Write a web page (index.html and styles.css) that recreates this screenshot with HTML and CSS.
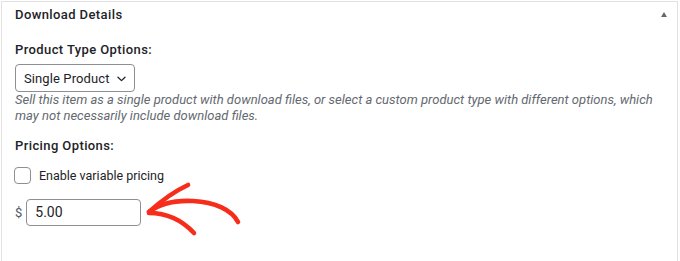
FILE: index.html
```html
<!DOCTYPE html>
<html lang="en">
<head>
    <meta charset="UTF-8">
    <title>Download Details</title>
    <link rel="stylesheet" href="styles.css">
</head>
<body>
    <div class="postbox">
        <div class="postbox-header">
            <h2>Download Details</h2>
            <span class="toggle-indicator"></span>
        </div>
        <div class="inside">
            <p class="field-label">Product Type Options:</p>
            <div class="select-box">
                <span>Single Product</span>
                <svg class="chevron" width="9" height="6" viewBox="0 0 9 6"><path d="M1 1.2 L4.5 4.6 L8 1.2" fill="none" stroke="#1d2327" stroke-width="1.3" stroke-linecap="round" stroke-linejoin="round"/></svg>
            </div>
            <p class="description">Sell this item as a single product with download files, or select a custom product type with different options, which may not necessarily include download files.</p>

            <p class="field-label pricing-label">Pricing Options:</p>
            <label class="check-row">
                <span class="checkbox"></span>
                <span>Enable variable pricing</span>
            </label>
            <div class="price-row">
                <span class="currency">$</span>
                <div class="price-input">5.00</div>
            </div>
        </div>

        <svg class="arrow" width="110" height="65" viewBox="140 175 110 65">
            <g fill="none" stroke="#f72d1c" stroke-width="4.6" stroke-linecap="round" stroke-linejoin="round">
                <path d="M148 211 C 158 203, 172 199, 192 200 C 214 201, 231 209, 237 221"/>
                <path d="M148 211 C 160 200, 174 190, 187 184"/>
                <path d="M148 212 C 164 212, 179 217, 193 232"/>
            </g>
        </svg>
    </div>
</body>
</html>
```

FILE: styles.css
```css
body {
    margin: 0;
    background: #fff;
    color: #1d2327;
    font-family: Roboto, "Noto Sans", sans-serif;
    font-size: 13px;
}
.postbox {
    position: relative;
    margin: 1px 2px 0 1px;
    height: 270px;
    border: 1px solid #e2e2e4;
    border-bottom: none;
}
.postbox-header {
    display: flex;
    justify-content: space-between;
    align-items: center;
    padding: 2px 10px 0 13px;
    height: 22px;
}
.postbox-header h2 {
    margin: 0;
    font-size: 13px;
    font-weight: 500;
    letter-spacing: 0.4px;
    line-height: 20px;
}
.toggle-indicator {
    width: 0;
    height: 0;
    border-left: 3px solid transparent;
    border-right: 3px solid transparent;
    border-bottom: 5px solid #646970;
    margin-top: -2px;
}
.inside {
    padding: 14px 13px 0 13px;
}
.field-label {
    margin: 0 0 4px;
    font-weight: 500;
    letter-spacing: 0.4px;
    line-height: 20px;
}
.pricing-label {
    margin-top: 12px;
}
.select-box {
    display: flex;
    align-items: center;
    gap: 7px;
    box-sizing: border-box;
    width: fit-content;
    height: 28px;
    padding: 0 8px 0 8px;
    border: 1px solid #8c8f94;
    border-radius: 4px;
    font-size: 13px;
    letter-spacing: 0.1px;
    white-space: nowrap;
}
.chevron {
    flex-shrink: 0;
    margin-top: 1px;
}
.description {
    margin: 0;
    color: #646970;
    font-style: italic;
    line-height: 16px;
}
.check-row {
    display: flex;
    align-items: center;
    gap: 8px;
    margin-top: 11px;
    height: 16px;
    font-size: 12.5px;
}
.checkbox {
    box-sizing: border-box;
    width: 17px;
    height: 17px;
    margin-left: -1px;
    border: 1px solid #8c8f94;
    border-radius: 4px;
}
.price-row {
    display: flex;
    align-items: center;
    gap: 4px;
    margin-top: 16px;
}
.currency {
    color: #50575e;
}
.price-input {
    box-sizing: border-box;
    width: 115px;
    height: 27px;
    padding: 0 8px;
    line-height: 25px;
    font-size: 14px;
    border: 1px solid #8c8f94;
    border-radius: 4px;
}
.arrow {
    position: absolute;
    left: 139px;
    top: 174px;
}
```
